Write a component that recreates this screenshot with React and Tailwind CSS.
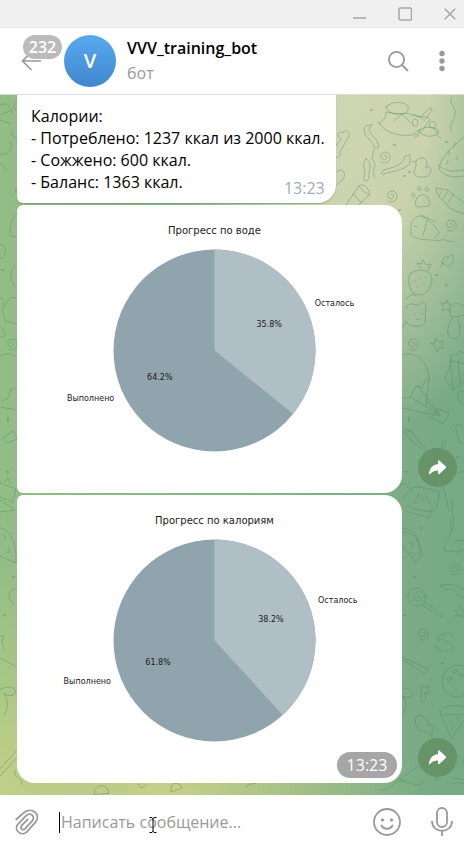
import React from "react";

const CHARTS = [
  { title: "Прогресс по воде", left: 35.8, done: 64.2 },
  { title: "Прогресс по калориям", left: 38.2, done: 61.8, time: "13:23" },
];

const CX = 197.5;
const CY = 145.5;
const R = 101;

function point(share, radius) {
  const a = share * 2 * Math.PI;
  return [CX + Math.sin(a) * radius, CY - Math.cos(a) * radius];
}

function Pie({ title, left, done }) {
  const [ex, ey] = point(left / 100, R);
  const [lx, ly] = point(left / 200, R * 1.1);
  const [lpx, lpy] = point(left / 200, R * 0.6);
  const doneMid = left / 100 + done / 200;
  const [dx, dy] = point(doneMid, R * 1.1);
  const [dpx, dpy] = point(doneMid, R * 0.6);
  return (
    <svg viewBox="0 0 385 288" className="block h-auto w-full font-['DejaVu_Sans',sans-serif] text-[8px]" fill="#1a1a1a" role="img" aria-label={title}>
      <text x={CX} y="29" textAnchor="middle" className="text-[10px]">{title}</text>
      <circle cx={CX} cy={CY} r={R} fill="#90a4ae" />
      <path d={`M${CX} ${CY}V${CY - R}A${R} ${R} 0 0 1 ${ex} ${ey}Z`} fill="#b0bec5" />
      <text x={lx} y={ly + 3}>Осталось</text>
      <text x={lpx} y={lpy + 3} textAnchor="middle">{left}%</text>
      <text x={dx} y={dy + 3} textAnchor="end">Выполнено</text>
      <text x={dpx} y={dpy + 3} textAnchor="middle">{done}%</text>
    </svg>
  );
}

function Spiral({ x, y }) {
  return <path d={`M${x} ${y}c2-2 4 1 2 3s-6 0-5-4 8-4 9 1-4 9-9 6`} />;
}

function Wallpaper() {
  return (
    <svg viewBox="0 95 464 700" preserveAspectRatio="xMidYMin slice" className="absolute inset-0 h-full w-full" fill="none" stroke="#4f8a64" strokeOpacity="0.42" strokeWidth="1" strokeLinecap="round" strokeLinejoin="round" aria-hidden="true">
      {/* vase, bone and ribbons */}
      <path d="M379 123c5-2 7-6 7-11 8 1 14 3 22 1 5 5 18 2 22 6-4 5-6 12-13 15-12 3-29 2-38-11zM386 107c5-6 17-6 22-1 1 5-2 7-6 8-8 1-14-1-16-7zM394 121l8-7 9 9M413 114l10 5M420 117l10-9c3-1 2 3 0 5l-6 8" />
      <path d="M419 131c2-5 16-5 20 0-3 6-15 8-20 0zM414 133l6-4M438 133l-4-4M413 125c-3-7 5-8 5-2 0 3-2 5-5 2zM430 127c-3-5 4-8 6-3 0 3-2 6-6 3zM419 135l-5 3M436 134l5 4" />
      <path d="M341 139c-6-4-2-9 2-6 1-4 8-2 6 3l-9 16c2 5-4 7-6 3-6 0-5-7-1-6zM366 126c-4 2-1 10 3 13 3 4 5 6 6 9l4-1c-2-8-5-10-8-13-3-4-2-7 1-9zM384 170c-4 2-3 5 0 4 8-3 20-3 26-11l0-8-5 1c-1 10-15 12-21 14zM374 150l-2 8 3 6-2 8 2 6M366 159c-4 5-2 9-1 13-1 5-3 9 2 9 3-3 1-8 3-12 0-4 1-7-4-10zM337 172c5-6 10 2 6 7l-10 9M452 97c-5 6 5 10 3 18-1 6-6 9-4 16" />
      {/* firecracker, chick, paw, watermelon, pencil */}
      <path d="M346 205l13-19c4-4 12 4 10 9l-19 18M359 186c2 3 6 7 10 9M353 194l9 9M416 165c-2-6 5-9 9-6 3 3 2 7 0 8 8-2 7 6 3 9-9 3-17 0-13-7zM412 162l4-1M417 198c3-5 10-4 11 1l2 4c0 6-6 2-9 4-6 1-7-3-4-9zM413 197c-3-3 0-6 2-2zM418 190c-1-4 3-5 3-1zM425 190c0-4 4-4 3 1zM464 137c-11 9-23 19-25 32 7 10 18 8 25 7M438 165c8 7 17 7 26 5M449 151v4M455 143l-1 4M448 160l-1 4M457 156v4M436 188l12 2 16 13M436 188c0 10 9 12 13 20l15 6M448 191l-5 8M453 195l-5 8M439 196l3-5" />
      <Spiral x={391} y={195} /><Spiral x={450} y={224} /><Spiral x={412} y={343} /><Spiral x={454} y={568} /><Spiral x={422} y={633} /><Spiral x={384} y={156} /><Spiral x={11} y={343} />
      {/* whale, strawberry, leaf */}
      <path d="M411 235c-2-14 4-19 9-19 9 2 17 12 19 17l-4 5M411 235c4 6 20 4 28 6 4-3 8 0 14 1M427 220l-4 15M414 226l3 1M421 215l15 7M411 273c7-5 20-4 21 6-1 14-12 20-20 13-3-5-5-14-1-19zM421 268l-4-5 5 1 1-4 3 5 5-1-3 6M415 280v1M420 277v1M426 277v1M418 286v1M424 284v1M442 263c-1-8 8-5 11-9 1 9-1 16-11 9zm6-4-8 8" />
      {/* cats, mushroom, stars */}
      <path d="M406 309c2-11 12 0 15-6 3-3 5 1 5 5-2 9 2 16-6 18-5 1-12 0-14-5l-3 7M414 314l2 1M421 313l2 1M416 319l3 1 2-2M406 299c3-2 5-7 10-3M451 316c-4-6 2-10 5-13l8 3M451 316c4 2 10 0 13-1M453 317c-5 9-9 19 0 22 8 1 8-10 5-20M441 303l4 1 2-4 1 4 4 0-3 3 1 4-4-2-4 2 1-4zM431 343l4 0 1-5 3 4 4-1-2 4 3 3-5 0-2 4-2-5zM455 610l3 0 2-4 2 4 3 0-3 3 1 4-4-2-4 2 2-4z" />
      {/* balloon */}
      <path d="M402 355c15-6 28 10 27 25l-3 25M402 399l8-2 6-11 6 2 4-9 3 1M402 408l38 8M426 400l13 15M418 386l22 28M438 409l-7 9 12 6 6-10zM410 397l30 18M464 353l-5-2-3 4-6 0 2 6-7 18 8 11 11-9M450 359l3 31M458 360l2 24M452 361l12 3" />
      {/* telescope, camera, cupcake */}
      <path d="M403 432l11 11 17 13M403 432c2-3 6-4 8-1l4 6 13 14M405 434c2-2 5-4 7-2M461 425c-6-3-6 3-4 8l2 9 5 2M442 441v7M445 440v7M464 392c-6-5-9 5-4 10l4 3M400 487c1-4 8-5 8 1M410 489c8-6 22 2 30 3l-4 17c-2 6-26-1-28-3M414 504l4-10 5 6 3-4 4 8M402 499l10-11M443 486l6 25M464 471l-7 2" />
      {/* pizza, dinosaur */}
      <path d="M402 532c10-1 20 10 20 24l-7 6-13-16M402 528c11 1 19 9 17 26M409 543c3-2 5 1 3 4M409 553c3-3 7 1 5 5M405 511l24 7 4-12M452 500c-2 17 8 22-6 42l-3 8 14 2 7-2M464 541l-7-1-6 6" />
      <path d="M450 519c3 2-1 3 1 5s-2 3 0 5-2 3-1 5" />
      {/* lollipop, horseshoe, berry */}
      <circle cx="417" cy="597" r="9" />
      <path d="M417 597c2-3 5 1 2 3s-7-1-4-6 10-1 9 4M424 602l19 12-1 3-21-12M441 585l3 5 8-1c5 2 6 9 12 9M441 585c4 0 15-3 23 5M440 588l3-4M439 641c1-5 7-2 5 1 6-2 12 4 7 8-4 3-9 1-13-3M438 641c-2-8 4-8 6-5 0-6 8-4 8 0M437 643c-2 5 0 9 5 10M402 657l24 11c3 0 1 5-2 5l-22-14" />
      {/* candy, fish, cookie, melon slice */}
      <path d="M422 686l4 1 2-2v8l-4 0c2 4 4 6 1 8l-3 1-1-5c2-4-2-7 1-11zM402 688c9-1 15 6 9 9l-9 0c5 2 5 11 0 17M416 717c4-4 10 0 13 8l6 1-3 4 0 7-5-5c-7 1-14-5-11-15zM420 722v1" />
      <circle cx="458" cy="681" r="16" />
      <path d="M451 679c-3 4-5 1-3-1s5-1 3 1zM457 671c-3 4-5 1-3-1s5-1 3 1zM463 675c-2 4-5 1-3-1zM440 711c6-7 18-6 24-4M440 711c1 9 9 18 11 28l13-19M442 716c8-3 15 0 22-2M450 721l1 2M451 730l3-3M457 717v3M400 780c10-9 27-17 32-29l6 4c-8 5-6 18 0 26M380 790c9 2 13-10 22-9 11 0 14 9 23 0M390 770c4 9 12 7 15 13M452 758c5-4 11-1 12 6M450 777l14 3M453 783h11" />
      {/* left and bottom edges */}
      <path d="M0 105c5-3 11 0 12 8M0 115l12-5M0 120l10 4M17 102c-5 2-3 9 0 9M13 131c-5 5 5 5 4 10M10 141c4 4 0 16-10 13M0 163l7 8M17 214c-7 5-7 15-7 22l7 1M0 244c8 1 7 13 0 15M17 265c-8 4-8 18-2 21M0 298c5-1 5 6 2 8M17 298c-9-4-10 8-15 11l3 12 12 3M0 327c8 7 6 12 0 9M0 356c9-5 13-1 17 1M17 389l-6 0-3 9-7 4M0 407l17 3M3 438l10-7 4 8-10 4zM0 483l16 6-3 13-13-5M5 482c0-5 7-3 5 1M0 500l15 10-15 2M0 528c10 1 17 14 16 35l-16-7M3 535c4 1 3 5 0 5M8 548c3 2 1 6-1 4M17 588c-9 0-11 12-3 16M0 636l4 0-2 6 2 8M0 658l17 9M0 690c8-6 17-2 15 3-2 4-9 3-11 0 5 8 4 18 0 22M0 769l17-19M0 776l22-24M15 770c-2 10 8 7 7 14M94 794c1-11 13-11 15-1zM138 783c2 7 5 5 9 1M172 785c2-3 9-2 10 3l-11 4zM246 787c3-5 8-2 12-5" />
      {/* crumbs */}
      <path d="M371 110h1M394 145h1M404 176h1M446 142h1M409 172h1M436 275h1M446 285h1M409 418v3M406 472h1M457 457h1M421 528h1M414 577h1M404 615h1M442 663h1M399 210h1M16 190v2M2 270h1M8 418v3M7 472h1M13 577h1M4 615h1" strokeWidth="2" />
    </svg>
  );
}

function ForwardButton() {
  return (
    <button type="button" aria-label="Переслать" className="mb-1.5 flex size-[39px] shrink-0 items-center justify-center rounded-full bg-[#669468]">
      <svg viewBox="0 0 20 18" className="h-[18px] w-5" fill="#fff" aria-hidden="true">
        <path d="M10 2.200c0-.9.7-1.200 1.300-.6l6.500 6c.4.4.4.900 0 1.300l-6.500 6c-.6.6-1.300.3-1.300-.6v-2.900c-3.600 0-6 1.200-8.300 3.900-.4.4-.8.2-.7-.4C1.400 9.600 4.200 5.900 10 5.300z" />
      </svg>
    </button>
  );
}

export default function App() {
  return (
    <div className="flex h-screen flex-col overflow-hidden bg-white font-['Open_Sans','Noto_Sans',sans-serif] text-base text-black">
      <div className="flex h-7 shrink-0 items-center justify-end border-b border-[#e8e8e8] bg-[#f0f0f0] pr-2 text-[#a6a6a6]">
        <button type="button" aria-label="Свернуть" className="mr-8">
          <svg viewBox="0 0 13 14" className="h-3.5 w-[13px]" stroke="currentColor" strokeWidth="1.500"><path d="M0 11h13" /></svg>
        </button>
        <button type="button" aria-label="Развернуть" className="mr-8">
          <svg viewBox="0 0 14 14" className="size-3.5" fill="none" stroke="currentColor" strokeWidth="1.500"><rect x="1" y="1" width="12.500" height="12" rx="1.500" /></svg>
        </button>
        <button type="button" aria-label="Закрыть">
          <svg viewBox="0 0 12 12" className="size-3" fill="none" stroke="currentColor" strokeWidth="1.500"><path d="M.7.7l10.600 10.600M11.300.7L.7 11.300" /></svg>
        </button>
      </div>

      <header className="flex h-[67px] shrink-0 items-center border-b border-[#dcdcdc] bg-white">
        <button type="button" aria-label="Назад, 232 непрочитанных" className="relative ml-[21px] mr-[23px] text-[#999]">
          <svg viewBox="0 0 20 20" className="size-5" fill="none" stroke="currentColor" strokeWidth="1.700"><path d="M20 10H1.500M10.500 1L1.500 10l9 9" /></svg>
          <span className="absolute -top-4 left-0.5 flex h-6 w-[39px] items-center justify-center rounded-full bg-[#bbb] text-base font-semibold text-white">232</span>
        </button>
        <div className="flex size-[52px] shrink-0 items-center justify-center rounded-full bg-linear-to-b from-[#58a9f0] to-[#4187cf] text-xl font-semibold text-white">V</div>
        <div className="ml-[11px] min-w-0 flex-1">
          <h1 className="truncate text-base leading-[25px] font-semibold">VVV_training_bot</h1>
          <p className="text-base leading-[25px] text-[#999]">бот</p>
        </div>
        <button type="button" aria-label="Поиск" className="mr-[30px] text-[#999]">
          <svg viewBox="0 0 22 22" className="size-[22px]" fill="none" stroke="currentColor" strokeWidth="1.800"><circle cx="9.500" cy="9.500" r="7.600" /><path d="M15 15l6 6" /></svg>
        </button>
        <button type="button" aria-label="Меню" className="mr-[19px] text-[#999]">
          <svg viewBox="0 0 6 22" className="h-[22px] w-1.5" fill="currentColor"><circle cx="3" cy="3.500" r="2.700" /><circle cx="3" cy="11" r="2.700" /><circle cx="3" cy="18.500" r="2.700" /></svg>
        </button>
      </header>

      <main className="relative flex min-h-0 flex-1 flex-col justify-end overflow-hidden bg-[radial-gradient(ellipse_260px_130px_at_35%_100%,#c8d088_0%,#c8d08800_100%),radial-gradient(ellipse_140px_240px_at_0%_100%,#bccf86_0%,#bccf8600_100%),radial-gradient(ellipse_190px_350px_at_76%_0%,#ced6b0_0%,#cad3ae_40%,#cad3ae00_100%),linear-gradient(to_right,#93bd86_0%,#84b287_60%,#77a985_100%)]">
        <Wallpaper />
        <div className="relative flex flex-col gap-0.5 pr-[7px] pb-3 pl-[17px]">
          <div className="flex max-w-[319px] items-end rounded-b-[6px] rounded-br-[18px] bg-white px-3.5 pt-4 pb-2.5 shadow-[0_1px_1px_#5a8a5a80]">
            <div className="relative flex-1 leading-[22px] whitespace-nowrap">
              <p>Калории:</p>
              <p>- Потреблено: 1237 ккал из 2000 ккал.</p>
              <p>- Сожжено: 600 ккал.</p>
              <p>- Баланс: 1363 ккал.</p>
              <time className="absolute right-0 -bottom-1.5 text-[#a0acb6]">13:23</time>
            </div>
          </div>
          {CHARTS.map((chart) => (
            <div key={chart.title} className="flex items-end justify-between">
              <figure className={`relative w-[385px] overflow-hidden rounded-[18px] rounded-tl-[6px] bg-white ${chart.time ? "" : "rounded-bl-[6px]"}`}>
                <Pie {...chart} />
                {chart.time && (
                  <time className="absolute right-[5px] bottom-[5px] flex h-[26px] w-[60px] items-center justify-center rounded-full bg-[#a6a6a6] text-white">{chart.time}</time>
                )}
              </figure>
              <ForwardButton />
            </div>
          ))}
        </div>
      </main>

      <footer className="flex h-[53px] shrink-0 items-center bg-white text-[#999]">
        <button type="button" aria-label="Прикрепить файл" className="ml-[13px]">
          <svg viewBox="0 0 28 28" className="size-7" fill="none" stroke="currentColor" strokeWidth="1.800" strokeLinecap="round">
            <path d="M3.200 11.500l7.300-6.600c8-7 18 1.500 12 9.300l-8.600 9.600C9 29 .3 22.500 4.600 16.600l8.300-8.700c4.500-4.300 9.800.8 6.500 4.700l-7.200 8c-2.500 2.500-5.600-.3-3.600-2.900l6-6.400" />
          </svg>
        </button>
        <div className="relative ml-[18px] flex-1">
          <span className="absolute top-0.5 left-0 h-[21px] w-px bg-black" />
          <input type="text" aria-label="Сообщение" placeholder="Написать сообщение..." className="block h-6 w-full bg-transparent pl-0.5 text-base text-black outline-none placeholder:text-[#999]" />
          <svg viewBox="0 0 8 16" className="absolute top-[7px] left-[90px] h-4 w-2" fill="none" stroke="#000" aria-hidden="true"><path d="M.5.5H3l1 1 1-1h2.500M4 1v14M.5 15.500H3l1-1 1 1h2.500" /></svg>
        </div>
        <button type="button" aria-label="Эмодзи" className="mr-[30px]">
          <svg viewBox="0 0 28 28" className="size-7" fill="none" stroke="currentColor" strokeWidth="1.800" strokeLinecap="round">
            <circle cx="14" cy="14" r="13" /><path d="M8.500 17.500c2.500 4.500 8.500 4.500 11 0" /><circle cx="9.500" cy="12" r="1.200" fill="currentColor" strokeWidth="1" /><circle cx="18.500" cy="12" r="1.200" fill="currentColor" strokeWidth="1" />
          </svg>
        </button>
        <button type="button" aria-label="Голосовое сообщение" className="mr-[11px]">
          <svg viewBox="0 0 22 30" className="h-[30px] w-[22px]" fill="none" stroke="currentColor" strokeWidth="1.800">
            <rect x="6" y="1" width="10" height="19" rx="5" /><path d="M1 14c0 13 20 13 20 0M11 24v5" />
          </svg>
        </button>
      </footer>
    </div>
  );
}
